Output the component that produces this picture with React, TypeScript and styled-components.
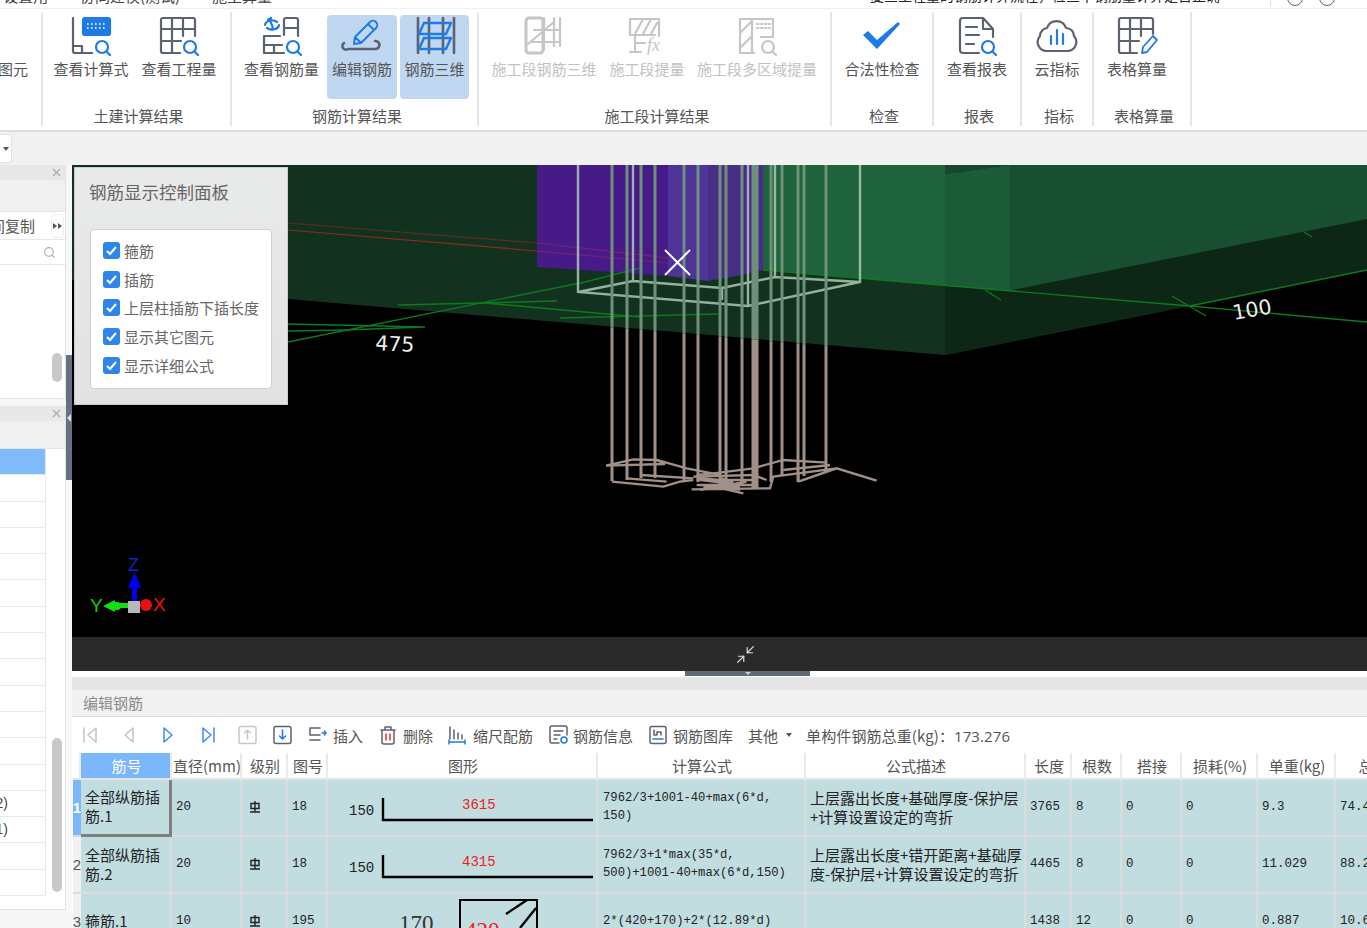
import React from "react";
import styled, { createGlobalStyle } from "styled-components";
import { Minimize2, X, Search } from "lucide-react";

const GRAY = "#5b6270";
const BLUE = "#1e7be6";
const OFF = "#c6c6c6";
const CJK = `"Noto Sans CJK SC", "Liberation Sans", sans-serif`;
const CELL = `"Liberation Mono", "Noto Sans CJK SC", monospace`;

const Global = createGlobalStyle`
  html, body { margin: 0; padding: 0; background: #fff; overflow: hidden; }
  body { font-family: ${CJK}; }
`;

const Page = styled.div`
  width: 1367px; height: 928px; overflow: hidden; display: flex; flex-direction: column; background: #fff;
`;
const TopStrip = styled.div`
  height: 8px; flex: none; overflow: hidden; display: flex; align-items: flex-end; font-size: 15px; color: #444;
  border-bottom: 1px solid #f0f0f0;
`;
const TopItem = styled.span<{ $w: number }>`
  width: ${p => p.$w}px; flex: none; line-height: 21px; white-space: nowrap; transform: translateY(-2px);
`;
const TopNotice = styled(TopItem)`
  color: #222; font-size: 14px; overflow: hidden; border-right: 1px solid #ddd;
`;
const TopCircle = styled.span`
  width: 14px; height: 14px; flex: none; margin-left: 16px; border: 1px solid #666; border-radius: 50%; transform: translateY(-2px);
`;
const Ribbon = styled.div`
  height: 121px; flex: none; display: flex; border-bottom: 2px solid #dedede; background: #fff; box-sizing: content-box;
`;
const Group = styled.div<{ $w: number; $pl?: number; $pr?: number }>`
  width: ${p => p.$w}px; flex: none; box-sizing: border-box; margin: 3px 0 4px; border-right: 2px solid #e6e6e6;
  display: flex; flex-direction: column; padding: 3px ${p => p.$pr ?? 0}px 0 ${p => p.$pl ?? 0}px;
`;
const Tools = styled.div`
  height: 84px; display: flex;
`;
const ClippedTool = styled.div`
  height: 84px; padding-top: 37px; box-sizing: border-box; overflow: hidden; direction: rtl; font-size: 15px; color: #555; line-height: 34px; white-space: nowrap; margin-right: 13px;
`;
const Tool = styled.div<{ $w: number; $active?: boolean; $off?: boolean; $ml?: number }>`
  width: ${p => p.$w}px; height: 84px; flex: none; display: flex; flex-direction: column; align-items: center;
  margin-left: ${p => p.$ml ?? 0}px; border-radius: 4px; background: ${p => (p.$active ? "#bfd7f1" : "transparent")};
  color: ${p => (p.$off ? "#c2c2c2" : "#555")}; font-size: 15px; line-height: 22px; white-space: nowrap;
  svg { display: block; margin-top: 1px; margin-bottom: 2px; }
`;
const GroupLabel = styled.div<{ $lx?: number }>`
  flex: 1; display: flex; align-items: center; justify-content: center; font-size: 15px; color: #555; padding: 6px 0 0 ${p => p.$lx ?? 0}px; line-height: 20px;
`;
const SubBar = styled.div`
  height: 33px; flex: none; background: #f1f1f1; display: flex; align-items: center;
`;
const DropStub = styled.div`
  width: 12px; height: 29px; background: #fff; border: 1px solid #e2e2e2; border-left: none; border-radius: 0 4px 4px 0;
  display: flex; align-items: center; justify-content: center; box-sizing: border-box;
`;
const Caret = styled.span`
  width: 0; height: 0; border: 3px solid transparent; border-top: 4px solid #555; border-bottom: none; display: block;
`;
const Body = styled.div`
  flex: 1; min-height: 0; display: flex;
`;
const Side = styled.div`
  width: 66px; flex: none; display: flex; flex-direction: column; gap: 7px; background: #f7f7f7;
`;
const SidePanel = styled.div<{ $h: number }>`
  height: ${p => p.$h}px; flex: none; display: flex; flex-direction: column; background: #fff; border-right: 1px solid #e2e2e2; border-bottom: 1px solid #e2e2e2; box-sizing: border-box;
`;
const SideHead = styled.div`
  height: 15px; flex: none; background: #e8e8e8; display: flex; justify-content: flex-end; align-items: center; padding-right: 2px; color: #aaa;
`;
const SideGray = styled.div<{ $h: number }>`
  height: ${p => p.$h}px; flex: none; background: #f0f0f0; border-bottom: 1px solid #e4e4e4; box-sizing: border-box;
`;
const SideTool = styled.div`
  height: 28px; flex: none; display: flex; align-items: center; border-bottom: 1px solid #e6e6e6; font-size: 15px; color: #555; white-space: nowrap; box-sizing: border-box;
`;
const ClipLabel = styled.div`
  width: 50px; flex: none; overflow: hidden; direction: rtl; margin-right: 1px; padding-right: 15px; box-sizing: border-box;
`;
const MoreBtn = styled.div`
  width: 13px; height: 24px; border: 1px solid #eee; border-radius: 4px; box-sizing: border-box; display: flex; align-items: center; justify-content: center; gap: 1px;
`;
const Tri = styled.span`
  width: 0; height: 0; border: 3px solid transparent; border-left: 4px solid #555; border-right: none;
`;
const SideSearch = styled.div`
  height: 25px; flex: none; display: flex; align-items: center; justify-content: flex-end; padding-right: 9px; border-bottom: 1px solid #e6e6e6; color: #aaa; box-sizing: border-box;
`;
const SideScrollArea = styled.div<{ $top: number; $h: number }>`
  flex: 1; display: flex; justify-content: flex-end; padding: ${p => p.$top}px 3px 0 0;
  &::after { content: ""; width: 10px; height: ${p => p.$h}px; background: #c9c9c9; border-radius: 5px; }
`;
const ListWrap = styled.div`
  flex: 1; min-height: 0; display: flex;
`;
const List = styled.div`
  width: 46px; flex: none; display: flex; flex-direction: column;
`;
const ListRow = styled.div<{ $sel?: boolean }>`
  height: 26.3px; flex: none; box-sizing: border-box; background: ${p => (p.$sel ? "#7fbafc" : "#fff")}; border-bottom: 1px solid #e8e8e8; border-right: 1px solid #e8e8e8;
  font-size: 14px; color: #444; display: flex; align-items: center; justify-content: flex-end; overflow: hidden; padding-right: 37px; font-family: "Liberation Sans", sans-serif; white-space: nowrap;
`;
const Thumb = styled.div`
  width: 10px; height: 154px; margin: 289px 0 0 6px; background: #c9c9c9; border-radius: 5px;
`;
const Splitter = styled.div`
  width: 6px; flex: none; background: #f7f7f7; padding-top: 190px; box-sizing: border-box;
`;
const SplitGrip = styled.div`
  height: 125px; background: #667080; display: flex; align-items: center; justify-content: center;
`;
const GripArrow = styled.span`
  width: 0; height: 0; border: 4px solid transparent; border-right: 4px solid #ddd; border-left: none;
`;
const Right = styled.div`
  width: 1295px; flex: none; display: flex; flex-direction: column;
`;
const Viewport = styled.div`
  height: 472px; flex: none; position: relative; background: #000; overflow: hidden; svg { display: block; }
`;
const Floating = styled.div`
  position: absolute; left: 2px; top: 2px; width: 214px; height: 238px; box-sizing: border-box; background: linear-gradient(#e9eaea, #e2e2e2);
  border: 1px solid #ccc; padding: 12px 15px 15px 14px;
`;
const FloatTitle = styled.div`
  font-size: 17.5px; line-height: 24px; color: #666; height: 49px; white-space: nowrap;
`;
const CheckBox = styled.div`
  background: #fff; border: 1px solid #d0d0d0; border-radius: 4px; padding: 6px 0 0 12px; height: 160px; box-sizing: border-box; display: flex; flex-direction: column; margin-left: 1px;
`;
const CheckRow = styled.label`
  height: 28.7px; flex: none; display: flex; align-items: center; gap: 4px; font-size: 15px; color: #666; white-space: nowrap;
`;
const Tick = styled.span`
  width: 17px; height: 17px; border-radius: 3px; background: #2f86ea; display: flex; align-items: center; justify-content: center;
`;
const DarkBar = styled.div`
  height: 34px; flex: none; background: #2a2a2a; color: #ddd; display: flex; align-items: center; padding-left: 663px;
`;
const Gutter = styled.div`
  height: 6px; flex: none; background: #fff; padding-left: 613px;
`;
const Handle = styled.div`
  width: 125px; height: 5px; background: #5f6a76; display: flex; justify-content: center;
`;
const HandleArrow = styled.span`
  width: 0; height: 0; border: 3px solid transparent; border-top: 3px solid #ccc; border-bottom: none; margin-top: 1px;
`;
const Strip = styled.div`
  height: 13px; flex: none; background: #e6e6e6;
`;
const PanelTitle = styled.div`
  height: 27px; flex: none; box-sizing: border-box; background: #f1f1f1; border-bottom: 1px solid #dcdcdc; padding-left: 11px; font-size: 15px; line-height: 25px; color: #8a8a8a;
`;
const Toolbar = styled.div`
  height: 36px; flex: none; display: flex; align-items: center; background: #fff; font-size: 15px; color: #555; white-space: nowrap;
`;
const NavBtn = styled.div<{ $w: number }>`
  width: ${p => p.$w}px; flex: none; display: flex; justify-content: center; svg { display: block; }
`;
const Action = styled.div<{ $ml: number; $gap?: number }>`
  flex: none; margin-left: ${p => p.$ml}px; display: flex; align-items: center; gap: ${p => p.$gap ?? 6}px; svg { display: block; }
`;
const Weight = styled.div`
  margin-left: 14px; letter-spacing: 0.1px;
`;
const WeightNum = styled.span`
  font-family: "Open Sans", "Liberation Sans", sans-serif; margin-left: 0;
`;
const Table = styled.div`
  display: grid; margin-left: 1px; width: 1323px;
  grid-template-columns: 8px 91px 70px 46px 40px 270px 208px 220px 46px 50px 60px 76px 78px 60px;
  grid-template-rows: 27px 57px 57px 57px; overflow: hidden;
`;
const Head = styled.div<{ $sel?: boolean }>`
  box-sizing: border-box; font-size: 15px; color: ${p => (p.$sel ? "#fff" : "#555")}; background: ${p => (p.$sel ? "#7ab8fb" : "#fff")};
  display: flex; align-items: center; justify-content: center; padding-left: 2px; border-right: 2px solid #eaeaea; border-bottom: 2px solid #e2e2e2; white-space: nowrap; line-height: 25px;
`;
const RowHead = styled.div<{ $sel?: boolean }>`
  box-sizing: border-box; font-size: 15px; font-weight: ${p => (p.$sel ? 700 : 400)}; color: ${p => (p.$sel ? "#fff" : "#555")}; background: ${p => (p.$sel ? "#7ab8fb" : "#f1f1f1")};
  display: flex; align-items: center; justify-content: center; border-bottom: 2px solid #dcdcdc; font-family: "Liberation Sans", sans-serif; overflow: hidden;
`;
const Cell = styled.div<{ $selected?: boolean; $text?: boolean }>`
  box-sizing: border-box; background: #c1dde0; color: #222; padding: 0 2px 2px 4px;
  border-right: ${p => (p.$selected ? "3px solid #808080" : "2px solid #dcdcdc")}; border-bottom: ${p => (p.$selected ? "3px solid #808080" : "2px solid #dcdcdc")};
  font-family: ${p => (p.$text ? CJK : CELL)}; font-size: ${p => (p.$text ? 15 : 12.5)}px; line-height: ${p => (p.$text ? "19px" : "20px")};
  display: flex; align-items: center; overflow: hidden; white-space: ${p => (p.$text ? "normal" : "nowrap")};
  word-break: break-all;
`;
const FormulaText = styled.div`
  font-size: 12.2px; line-height: 18px; white-space: nowrap; margin-left: 1px;
`;
const FormulaLine = styled.div`
  display: block;
`;
const GradeMark = styled.svg`
  display: block; margin-left: 2px;
`;
const DrawCell = styled(Cell)`
  padding: 0; svg { display: block; }
`;

const I = ({ children }: { children: React.ReactNode }) => (
  <svg width="44" height="40" viewBox="0 0 44 40" fill="none" strokeWidth="2.2" strokeLinecap="round" strokeLinejoin="round">{children}</svg>
);
const Lens = ({ c = BLUE, x = 33, y = 31 }: { c?: string; x?: number; y?: number }) => (
  <g stroke={c}><circle cx={x} cy={y} r="6" /><path d={`M${x + 4.5} ${y + 4.5}L${x + 8} ${y + 8}`} /></g>
);

const icons: Record<string, React.ReactNode> = {
  calc: <I>
    <path stroke={GRAY} d="M4 2V35a2 2 0 0 0 2 2H23M4 30H13V37" />
    <rect x="14" y="2" width="27" height="17" rx="2" fill={BLUE} stroke={BLUE} />
    <path stroke="#fff" strokeWidth="1.6" strokeDasharray="1.6 2.4" strokeLinecap="butt" d="M18 8H38M18 12H38" />
    <Lens x={33} y={31} />
  </I>,
  qty: <I>
    <path stroke={GRAY} d="M23 37H6a2 2 0 0 1-2-2V4a2 2 0 0 1 2-2H36a2 2 0 0 1 2 2V20M4 13H38M4 25H24M15 2V37M26 2V20" />
    <Lens x={33} y={31} />
  </I>,
  rebar: <I>
    <path stroke={BLUE} d="M5 9a7 5 0 0 1 12-3M19 9a7 5 0 0 1-12 3M11 2c-3 4 4 8 1 12M11 2l-3 2" />
    <path stroke={GRAY} d="M24 19V4a2 2 0 0 1 2-2H36a2 2 0 0 1 2 2V20M24 12H38M4 20H20M4 20V37H24M4 29H22M14 29V37" />
    <Lens x={33} y={31} />
  </I>,
  edit: <I>
    <path stroke={GRAY} strokeWidth="2.6" d="M4 27a3.5 3.5 0 0 0 4 6H35a4 4 0 0 0 3-7a4 4 0 0 0-3-1" />
    <path stroke={BLUE} strokeWidth="2" d="M14 28L15 21L30 6a3 3 0 0 1 6 6L21 27ZM15 21L21 27M28 8L34 14" />
  </I>,
  r3d: <I>
    <path stroke={GRAY} strokeWidth="2.6" d="M5 2V37M16 2V37M30 2V37M41 2V37" />
    <path stroke={BLUE} strokeWidth="2.4" d="M11 7H38L33 18H6L11 7M11 22H38L33 33H6L11 22" />
  </I>,
  seg3d: <I>
    <rect x="4" y="2" width="17" height="35" rx="3" stroke={OFF} strokeWidth="3" />
    <path stroke={OFF} d="M6 28L32 6M12 14H36M8 26H36M22 2V34M32 2V30M38 2V30" />
  </I>,
  segfx: <I>
    <path stroke={OFF} d="M5 3H34V20M5 3V19H30M10 18L18 3M18 18L26 3M26 18L32 7M5 36H16M10 20V36M10 27H20" />
    <text x="22" y="35" fontFamily="Liberation Serif, serif" fontStyle="italic" fontSize="18" fill={OFF} stroke="none">fx</text>
  </I>,
  segmulti: <I>
    <path stroke={OFF} d="M19 37H5V3H17V37M5 17L17 5M5 32L17 20M17 3H38V21H26" />
    <path stroke={OFF} strokeDasharray="1.5 2.5" d="M22 8H35M22 12H35" />
    <Lens c={OFF} x={33} y={31} />
  </I>,
  check: <svg width="44" height="40" viewBox="0 0 44 40"><path fill={BLUE} d="M3 19L8 15L17 24L38 6L40 8L17 33Z" /></svg>,
  report: <I>
    <path stroke={GRAY} d="M24 37H8a3 3 0 0 1-3-3V5a3 3 0 0 1 3-3H28L38 13V21M28 2V13H38M11 11H22M11 19H24M11 28H19" />
    <Lens x={33} y={31} />
  </I>,
  cloud: <I>
    <path stroke={GRAY} d="M12 35a9 9 0 0 1-7-15a8 8 0 0 1 7-8a10 10 0 0 1 19 0a8 8 0 0 1 8 8a9 9 0 0 1-7 15Z" />
    <path stroke={BLUE} d="M16 20V28M22 14V28M28 18V28" />
  </I>,
  tableEdit: <I>
    <path stroke={GRAY} d="M22 37H6a2 2 0 0 1-2-2V4a2 2 0 0 1 2-2H36a2 2 0 0 1 2 2V18M4 13H38M4 25H24M15 2V37M26 2V20" />
    <path stroke={BLUE} strokeWidth="1.8" d="M27 37L28 31L38 20L42 24L32 36Z" />
  </I>,
};

const S = ({ w = 19, children }: { w?: number; children: React.ReactNode }) => (
  <svg width={w} height="20" viewBox={`0 0 ${w} 20`} fill="none" strokeWidth="1.5" strokeLinecap="round" strokeLinejoin="round">{children}</svg>
);

const ribbon = [
  { w: 189, pl: 4, tools: [{ t: "查看计算式", w: 88, i: "calc" }, { t: "查看工程量", w: 88, i: "qty" }], label: "土建计算结果" },
  { w: 247, pl: 5, tools: [{ t: "查看钢筋量", w: 89, i: "rebar" }, { t: "编辑钢筋", w: 70, i: "edit", a: true, ml: 1 }, { t: "钢筋三维", w: 69, i: "r3d", a: true, ml: 3 }], label: "钢筋计算结果" },
  { w: 353, pl: 5, tools: [{ t: "施工段钢筋三维", w: 120, i: "seg3d", o: true }, { t: "施工段提量", w: 86, i: "segfx", o: true }, { t: "施工段多区域提量", w: 134, i: "segmulti", o: true }], label: "施工段计算结果" },
  { w: 102, lx: 4, tools: [{ t: "合法性检查", w: 100, i: "check" }], label: "检查" },
  { w: 88, lx: 4, tools: [{ t: "查看报表", w: 86, i: "report" }], label: "报表" },
  { w: 72, lx: 4, tools: [{ t: "云指标", w: 70, i: "cloud" }], label: "指标" },
  { w: 98, pr: 10, lx: 14, tools: [{ t: "表格算量", w: 86, i: "tableEdit" }], label: "表格算量" },
] as { w: number; pl?: number; pr?: number; lx?: number; tools: { t: string; w: number; i: string; a?: boolean; o?: boolean; ml?: number }[]; label: string }[];

const rebarXs = [[612, 3, 481], [627, 3, 480], [641, 3, 478], [655, 3, 478], [684, 3, 482], [698, 3, 482], [720, 3, 484], [726, 3, 484], [742, 3, 486], [755, 7, 488], [771, 3, 482], [782, 3, 476], [798, 3, 482], [804, 3, 476], [826, 3, 472]];
const edgeY = (x: number) => 299 + (x - 288) * 0.0875;

const Scene = () => (
  <svg width="1295" height="472" viewBox="72 165 1295 472">
    <rect x="72" y="165" width="1295" height="472" fill="#000" />
    <polygon points="72,165 1367,165 1367,270 1190,306 945,355 288,299 72,280" fill="#12321f" />
    <polygon points="945,165 1367,165 1367,270 1190,306 945,355" fill="#0d2616" />
    <polygon points="763,165 945,165 945,286 763,270" fill="#1e633b" />
    <polygon points="945,165 945,174 1010,165" fill="#17482d" />
    <polygon points="945,174 1010,165 1010,291 945,286" fill="#1b5b37" />
    <polygon points="1010,165 1367,165 1367,219 1017,289 1010,291" fill="#184f31" />
    <polygon points="537,165 668,165 668,276 537,267" fill="#461b88" />
    <polygon points="668,165 708,165 708,281 668,276" fill="#4e3399" />
    <polygon points="708,165 742,165 742,275 708,281" fill="#462f85" />
    <polygon points="742,165 763,165 763,270 742,275" fill="#4a2a8c" />
    <g fill="none" strokeWidth="1.2">
      <path stroke="#5e2f20" d="M288 223L537 243" />
      <path stroke="#8a2c20" d="M288 230L537 251" />
      <path stroke="#7f1e74" d="M537 243L668 258M537 251L668 263" />
      <g stroke="#0d7a1e" strokeWidth="1.4">
        <path d="M288 342L585 282L640 268" />
        <path d="M288 324L425 327M288 331L345 330L425 327" />
        <path d="M398 305L557 301M485 303L640 317M560 318L718 314" />
        <path d="M763 270L1190 306L1367 322M1190 306L1367 270" />
        <path d="M985 290L1001 300M1172 296L1206 316M1304 232L1312 237" />
      </g>
    </g>
    <g stroke="#adc9b6" strokeWidth="2.4" fill="none" opacity="0.85">
      <path d="M578 165V292L748 306L860 282V165M578 292L633 281L722 288L775 277L860 282M633 165V281M748 165V306M775 165V277M722 288V300" />
    </g>
    {rebarXs.map(([x, w, end]) => (
      <g key={x} strokeWidth={w}>
        <line x1={x} x2={x} y1={165} y2={edgeY(x)} stroke="#6f9078" />
        <line x1={x} x2={x} y1={edgeY(x)} y2={end} stroke="#a09088" />
      </g>
    ))}
    <g transform="translate(500 160) scale(0.3333)" stroke="#a09088" strokeWidth="7" fill="none">
      <path d="M318 917L400 898L470 900L495 912L318 917M336 965L490 980L540 965L580 960M380 955L500 965M423 945L580 955" />
      <path d="M575 988L810 985L820 950L1010 925M590 945L640 940L760 925L850 900L980 908M895 965L1010 925L1130 962M600 960L760 960M620 975L730 1000M895 940V965" />
      <path d="M580 950L760 945L800 960M590 975L770 975M600 990L740 965M660 950L720 990M470 900L560 925L660 945M850 930L990 915" />
      <path strokeWidth="14" d="M590 955L700 970M610 980L720 985" />
    </g>
    <path stroke="#fff" strokeWidth="2" d="M665 250L690 275M690 250L665 275" />
    <text x="375" y="350" fontFamily="DejaVu Sans, sans-serif" fontSize="20.5" fill="#eee" transform="rotate(3 375 350)">475</text>
    <text x="1234" y="320" fontFamily="DejaVu Sans, sans-serif" fontSize="20.5" fill="#eee" transform="rotate(-10 1234 320)">100</text>
    <text x="128" y="571" fontFamily="Liberation Sans, sans-serif" fontSize="18" fill="#1122cc">Z</text>
    <text x="90" y="612" fontFamily="Liberation Sans, sans-serif" fontSize="19" fill="#10d010">Y</text>
    <text x="153" y="611" fontFamily="Liberation Sans, sans-serif" fontSize="19" fill="#ee1111">X</text>
    <rect x="132" y="586" width="5" height="18" fill="#0000f0" />
    <polygon points="134.5,572 128,588 141,588" fill="#0000f0" />
    <rect x="113" y="603" width="18" height="5" fill="#10e010" />
    <circle cx="117" cy="606" r="4" fill="#10e010" />
    <polygon points="103,606 115,600 115,612" fill="#10e010" />
    <circle cx="146" cy="605" r="6" fill="#e81010" />
    <rect x="128" y="601" width="12" height="12" fill="#b8b8b8" />
  </svg>
);

const Shape = ({ text, num }: { text: string; num: string }) => (
  <svg width="268" height="55" viewBox="0 0 268 55">
    <text x="21" y="35" fontFamily="Liberation Mono, monospace" fontSize="14" fill="#222">{num}</text>
    <path d="M55 18V40H265" fill="none" stroke="#000" strokeWidth="2.4" />
    <text x="134" y="29" fontFamily="Liberation Mono, monospace" fontSize="14" fill="#f02020">{text}</text>
  </svg>
);
const Stirrup = () => (
  <svg width="268" height="55" viewBox="0 0 268 55">
    <text x="71" y="37" fontFamily="Liberation Serif, serif" fontSize="23" fill="#333">170</text>
    <path d="M132 55V6H209V55" fill="none" stroke="#000" strokeWidth="2" />
    <path d="M178 20L199 6M192 34L208 14" stroke="#000" strokeWidth="2.4" />
    <text x="137" y="44" fontFamily="Liberation Serif, serif" fontSize="23" fill="#f02020">420</text>
  </svg>
);

const heads = ["直径(mm)", "级别", "图号", "图形", "计算公式", "公式描述", "长度", "根数", "搭接", "损耗(%)", "单重(kg)", "总"];
const rows = [
  { n: "1", name: "全部纵筋插筋.1", d: "20", fig: "18", f: ["7962/3+1001-40+max(6*d,", "150)"], desc: "上层露出长度+基础厚度-保护层+计算设置设定的弯折", len: "3765", c: "8", u: "9.3", tot: "74.4" },
  { n: "2", name: "全部纵筋插筋.2", d: "20", fig: "18", f: ["7962/3+1*max(35*d,", "500)+1001-40+max(6*d,150)"], desc: "上层露出长度+错开距离+基础厚度-保护层+计算设置设定的弯折", len: "4465", c: "8", u: "11.029", tot: "88.2" },
  { n: "3", name: "箍筋.1", d: "10", fig: "195", f: ["2*(420+170)+2*(12.89*d)"], desc: "", len: "1438", c: "12", u: "0.887", tot: "10.6" },
];

const checks = ["箍筋", "插筋", "上层柱插筋下插长度", "显示其它图元", "显示详细公式"];
const listRows = ["", "", "", "", "", "", "", "", "", "", "", "", "", "层级(2)", "筋(1)", "", ""];

export default function App() {
  return (
    <Page>
      <Global />
      <TopStrip>
        <TopItem $w={80}>&nbsp;设置用</TopItem>
        <TopItem $w={132}>协同建模(测试)</TopItem>
        <TopItem $w={658}>施工算量</TopItem>
        <TopNotice $w={400}>复查工程量的钢筋计算流程，检查中钢筋量计算是否正确</TopNotice>
        <TopCircle />
        <TopCircle />
      </TopStrip>
      <Ribbon>
        <Group $w={43}>
          <ClippedTool>查看图元</ClippedTool>
        </Group>
        {ribbon.map(g => (
          <Group key={g.label} $w={g.w} $pl={g.pl} $pr={g.pr}>
            <Tools>
              {g.tools.map(t => (
                <Tool key={t.t} $w={t.w} $active={t.a} $off={t.o} $ml={t.ml}>
                  {icons[t.i]}
                  {t.t}
                </Tool>
              ))}
            </Tools>
            <GroupLabel $lx={g.lx}>{g.label}</GroupLabel>
          </Group>
        ))}
      </Ribbon>
      <SubBar>
        <DropStub><Caret /></DropStub>
      </SubBar>
      <Body>
        <Side>
          <SidePanel $h={234}>
            <SideHead><X size={13} /></SideHead>
            <SideGray $h={32} />
            <SideTool>
              <ClipLabel>层间复制</ClipLabel>
              <MoreBtn><Tri /><Tri /></MoreBtn>
            </SideTool>
            <SideSearch><Search size={13} /></SideSearch>
            <SideScrollArea $top={88} $h={29} />
          </SidePanel>
          <SidePanel $h={504}>
            <SideHead><X size={13} /></SideHead>
            <SideGray $h={28} />
            <ListWrap>
              <List>
                {listRows.map((r, i) => <ListRow key={i} $sel={i === 0}>{r}</ListRow>)}
              </List>
              <Thumb />
            </ListWrap>
          </SidePanel>
        </Side>
        <Splitter>
          <SplitGrip><GripArrow /></SplitGrip>
        </Splitter>
        <Right>
          <Viewport>
            <Scene />
            <Floating>
              <FloatTitle>钢筋显示控制面板</FloatTitle>
              <CheckBox>
                {checks.map(c => (
                  <CheckRow key={c}>
                    <Tick>
                      <svg width="13" height="13" viewBox="0 0 13 13"><path d="M2 7L5 10L11 3" fill="none" stroke="#fff" strokeWidth="2" /></svg>
                    </Tick>
                    {c}
                  </CheckRow>
                ))}
              </CheckBox>
            </Floating>
          </Viewport>
          <DarkBar><Minimize2 size={21} strokeWidth={1.4} /></DarkBar>
          <Gutter><Handle><HandleArrow /></Handle></Gutter>
          <Strip />
          <PanelTitle>编辑钢筋</PanelTitle>
          <Toolbar>
            <NavBtn $w={35}><S w={15}><path stroke="#c4c4c4" d="M2 3V17M14 3L6 10L14 17Z" /></S></NavBtn>
            <NavBtn $w={44}><S w={12}><path stroke="#c4c4c4" d="M10 3L2 10L10 17Z" /></S></NavBtn>
            <NavBtn $w={34}><S w={12}><path stroke="#3d8cf0" d="M2 3L10 10L2 17Z" /></S></NavBtn>
            <NavBtn $w={46}><S w={15}><path stroke="#3d8cf0" d="M13 3V17M2 3L10 10L2 17Z" /></S></NavBtn>
            <NavBtn $w={33}><S><rect x="1" y="1.5" width="17" height="17" rx="2" stroke="#c8c8c8" /><path stroke="#c8c8c8" d="M9.5 14V5M6.5 8L9.5 5L12.5 8" /></S></NavBtn>
            <NavBtn $w={37}><S><rect x="1" y="1.5" width="17" height="17" rx="2" stroke={GRAY} /><path stroke={BLUE} d="M9.5 5V14M6.5 11L9.5 14L12.5 11" /></S></NavBtn>
            <Action $ml={7}><S><path stroke={GRAY} d="M12 3H2V10H12M2 15H12" /><path stroke={BLUE} d="M14 8H18M16.5 6L18 8L16.5 10" /></S>插入</Action>
            <Action $ml={17} $gap={7}><S w={16}><path stroke={GRAY} d="M2 5V17a2 2 0 0 0 2 2H12a2 2 0 0 0 2-2V5M1 5H15M5 5V2H11V5" /><path stroke="#e03030" d="M6 9V15M10 9V15" /></S>删除</Action>
            <Action $ml={15} $gap={7}><S w={18}><path stroke={GRAY} d="M2 2V14M6 5V14M10 8V14M14 10V14" /><path stroke={BLUE} d="M1 17H17M1 15V19M17 15V19" /></S>缩尺配筋</Action>
            <Action $ml={16} $gap={5}><S><path stroke={GRAY} d="M10 18H3a2 2 0 0 1-2-2V3a2 2 0 0 1 2-2H16a2 2 0 0 1 2 2V10M5 6H14M5 10H11M5 14H8" /><circle cx="15" cy="15" r="3" stroke={BLUE} /></S>钢筋信息</Action>
            <Action $ml={16} $gap={6}><S w={18}><rect x="1" y="1.5" width="16" height="17" rx="2" stroke={GRAY} /><path stroke={GRAY} d="M5 5V10H8V7H12V10" /><path stroke={BLUE} d="M4 14H14" /></S>钢筋图库</Action>
            <Action $ml={15} $gap={8}>其他<Caret /></Action>
            <Weight>单构件钢筋总重(kg)：<WeightNum>173.276</WeightNum></Weight>
          </Toolbar>
          <Table>
            <Head />
            <Head $sel>筋号</Head>
            {heads.map(h => <Head key={h}>{h}</Head>)}
            {rows.map((r, i) => (
              <React.Fragment key={r.n}>
                <RowHead $sel={i === 0}>{r.n}</RowHead>
                <Cell $text $selected={i === 0}>{r.name}</Cell>
                <Cell>{r.d}</Cell>
                <Cell>
                  <GradeMark width="14" height="14" viewBox="0 0 14 14" fill="none" stroke="#222" strokeWidth="1.4">
                    <path d="M3 3.5H11V8.5H3ZM7 1V12M2 12H12" />
                  </GradeMark>
                </Cell>
                <Cell>{r.fig}</Cell>
                <DrawCell>{i < 2 ? <Shape text={i === 0 ? "3615" : "4315"} num="150" /> : <Stirrup />}</DrawCell>
                <Cell><FormulaText>{r.f.map(l => <FormulaLine key={l}>{l}</FormulaLine>)}</FormulaText></Cell>
                <Cell $text>{r.desc}</Cell>
                <Cell>{r.len}</Cell>
                <Cell>{r.c}</Cell>
                <Cell>0</Cell>
                <Cell>0</Cell>
                <Cell>{r.u}</Cell>
                <Cell>{r.tot}</Cell>
              </React.Fragment>
            ))}
          </Table>
        </Right>
      </Body>
    </Page>
  );
}
